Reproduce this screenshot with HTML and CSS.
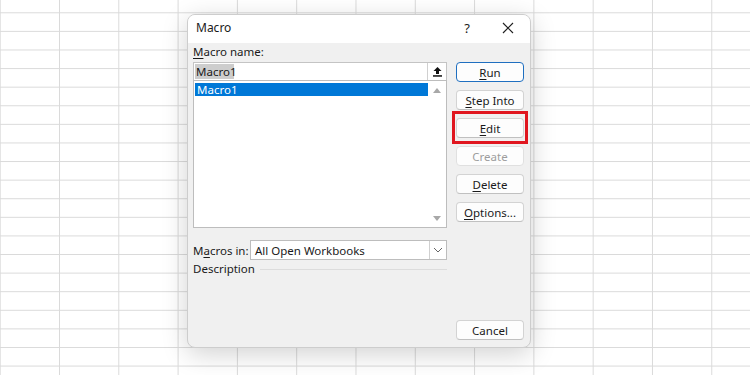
FILE: index.html
```html
<!DOCTYPE html>
<html lang="en">
<head>
    <meta charset="UTF-8">
    <title>Macro</title>
    <link rel="stylesheet" href="styles.css">
</head>
<body>
<div class="dialog">
    <div class="titlebar">
        <span class="title">Macro</span>
        <span class="help">?</span>
        <span class="close">
            <svg width="12" height="12" viewBox="0 0 12 12"><path d="M1 1L11 11M11 1L1 11" stroke="#222" stroke-width="1.2" fill="none"/></svg>
        </span>
    </div>
    <div class="body">
        <div class="left">
            <div class="label"><u>M</u>acro name:</div>
            <div class="namebox">
                <span class="sel">Macro1</span>
                <span class="upbtn">
                    <svg width="11" height="11" viewBox="0 0 11 11"><path d="M5.5 1L1.5 5H4V8H7V5H9.5Z" fill="#111"/><rect x="1" y="9.2" width="9" height="1.5" fill="#111"/></svg>
                </span>
            </div>
            <div class="list">
                <div class="items">
                    <div class="item active">Macro1</div>
                </div>
                <div class="scroll">
                    <svg width="8" height="5" viewBox="0 0 8 5"><path d="M4 0L8 5H0Z" fill="#a8a8a8"/></svg>
                    <svg width="8" height="5" viewBox="0 0 8 5"><path d="M0 0H8L4 5Z" fill="#a8a8a8"/></svg>
                </div>
            </div>
            <div class="inrow">
                <span class="label2">M<u>a</u>cros in:</span>
                <div class="select">
                    <span class="seltext">All Open Workbooks</span>
                    <span class="drop">
                        <svg width="10" height="6" viewBox="0 0 10 6"><path d="M1 1L5 5L9 1" stroke="#666" stroke-width="1" fill="none"/></svg>
                    </span>
                </div>
            </div>
            <div class="descrow">
                <span>Description</span>
                <span class="rule"></span>
            </div>
        </div>
        <div class="right">
            <button class="btn default"><u>R</u>un</button>
            <button class="btn"><u>S</u>tep Into</button>
            <button class="btn marked"><u>E</u>dit</button>
            <button class="btn disabled">Create</button>
            <button class="btn"><u>D</u>elete</button>
            <button class="btn"><u>O</u>ptions...</button>
            <button class="btn cancel">Cancel</button>
        </div>
    </div>
</div>
</body>
</html>
```

FILE: styles.css
```css
*{
    margin: 0;padding: 0;
    box-sizing: border-box;
}
html,body{height: 100%}
body{
    font-family: "Noto Sans", "Open Sans", sans-serif;
    font-size: 11.5px;
    color: #1a1a1a;
    background-color: #fff;
    background-image:
        linear-gradient(to right, #dadada 1px, transparent 1px),
        linear-gradient(to bottom, #dadada 1px, transparent 1px);
    background-size: 59.3px 100%, 100% 18.6px;
    background-position: 59px 0, 0 12.3px;
    overflow: hidden;
}
u{text-decoration: underline; text-underline-offset: 2px}

.dialog{
    width: 344px;
    height: 334px;
    margin: 14px 0 0 187px;
    background: #f0f0f0;
    border-radius: 8px;
    border: 1px solid #cdcdcd;
    box-shadow: 0 6px 26px rgba(0,0,0,0.18);
    display: flex;
    flex-direction: column;
    overflow: hidden;
}
.titlebar{
    height: 28px;
    background: #fff;
    display: flex;
    align-items: center;
    padding: 0 0 3px 8px;
    flex-shrink: 0;
}
.title{font-size: 12px; flex: 1}
.help{width: 14px; font-size: 13px; margin-right: 28px; text-align: center}
.close{width: 12px; margin-right: 16px; display: flex}

.body{
    flex: 1;
    display: flex;
    padding: 1px 6px 7px 5px;
}
.left{width: 254px}
.label{line-height: 15px; height: 15px; margin-bottom: 3px}

.namebox{
    height: 18px;
    background: #fff;
    border: 1px solid #c4c4c4;
    border-bottom: none;
    display: flex;
    align-items: center;
    padding-left: 1px;
}
.sel{
    background: #cdcdcd;
    line-height: 15px;
    padding: 0 1px;
    flex: 1;
    max-width: 39px;
}
.upbtn{
    margin-left: auto;
    width: 19px;
    height: 17px;
    border-left: 1px solid #d0d0d0;
    display: flex;
    align-items: center;
    justify-content: center;
}

.list{
    height: 148px;
    background: #fff;
    border: 1px solid #bdbdbd;
    display: flex;
}
.items{flex: 1; padding: 2px 0 0 1px}
.item{line-height: 13px; padding-left: 2px}
.item.active{background: #0078d7; color: #fff}
.scroll{
    width: 18px;
    display: flex;
    flex-direction: column;
    align-items: center;
    justify-content: space-between;
    padding: 7px 0 6px;
}

.inrow{
    display: flex;
    align-items: center;
    margin-top: 12px;
}
.label2{width: 57px}
.select{
    flex: 1;
    height: 20px;
    background: #fff;
    border: 1px solid #bdbdbd;
    display: flex;
    align-items: center;
}
.seltext{flex: 1; padding-left: 4px}
.drop{
    width: 17px;
    height: 18px;
    border-left: 1px solid #d0d0d0;
    display: flex;
    align-items: center;
    justify-content: center;
}
.descrow{
    display: flex;
    align-items: center;
    line-height: 16px;
    margin-top: 1px;
}
.rule{flex: 1; height: 1px; background: #dcdcdc; margin-left: 5px}

.right{
    width: 68px;
    margin-left: 9px;
    padding-top: 18px;
    display: flex;
    flex-direction: column;
    gap: 8px;
}
.btn{
    height: 20px;
    font: inherit;
    color: #1a1a1a;
    background: #fdfdfd;
    border: 1px solid #d3d3d3;
    border-bottom-color: #c0c0c0;
    border-radius: 4px;
}
.btn.default{border: 1px solid #1f6fc0}
.btn.disabled{color: #9d9d9d; border-color: #e0e0e0}
.btn.marked{position: relative}
.btn.marked::after{
    content: "";
    position: absolute;
    top: -8px;
    bottom: -7px;
    left: -5px;
    right: -5px;
    border: 3px solid #e0161f;
}
.btn.cancel{margin-top: auto}
```
